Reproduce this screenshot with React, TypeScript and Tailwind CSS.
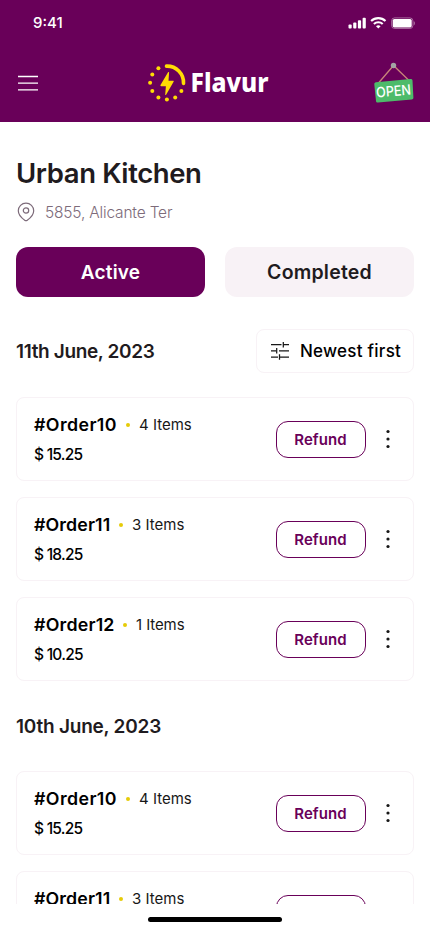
import { clsx } from "clsx";

type Order = {
  id: string;
  items: number;
  price: string;
  idClass: string;
  itemsClass: string;
};

const juneEleven: Order[] = [
  { id: "#Order10", items: 4, price: "15.25", idClass: "w-[82px] tracking-[0.400px]", itemsClass: "tracking-[0]" },
  { id: "#Order11", items: 3, price: "18.25", idClass: "w-[75px] tracking-[0.100px]", itemsClass: "tracking-[0]" },
  { id: "#Order12", items: 1, price: "10.25", idClass: "w-[79px] tracking-[0.200px]", itemsClass: "tracking-[-0.100px]" },
];

const juneTen = juneEleven.slice(0, 2);

const StatusBar = () => (
  <div className="flex h-[46px] items-center justify-between pl-[33px] pr-[15px] text-white">
    <span className="text-[15px] font-medium leading-5 tracking-[0]">9:41</span>
    <svg width="68" height="14" viewBox="0 0 68 14" fill="none">
      <g fill="white">
        <rect x="1.5" y="8.600" width="3.2" height="3.800" rx="0.9" />
        <rect x="6.2" y="6.600" width="3.2" height="5.800" rx="0.9" />
        <rect x="10.9" y="4.200" width="3.2" height="8.200" rx="0.9" />
        <rect x="15.6" y="1.8" width="3.2" height="10.6" rx="0.9" />
      </g>
      <g stroke="white" strokeWidth="2.1">
        <path d="M24.100 5a10.500 10.500 0 0 1 14.400 0" />
        <path d="M26.900 8a6.400 6.400 0 0 1 8.800 0" />
      </g>
      <path d="M31.3 12.6l-2.3-2.3a3.3 3.3 0 0 1 4.6 0z" fill="white" />
      <rect x="44.600" y="1.900" width="21.300" height="10.600" rx="3" stroke="white" strokeOpacity="0.4" />
      <rect x="45.700" y="3" width="19" height="8.400" rx="1.6" fill="white" />
      <path d="M66.800 5.200v4c.8-.3 1.100-1.1 1.100-2s-.3-1.700-1.100-2z" fill="white" fillOpacity="0.45" />
    </svg>
  </div>
);

const Logo = () => (
  <div className="flex items-center">
    <svg width="40" height="40" viewBox="0 0 40 40" fill="#ffdc04">
      <path d="M19.500 3.100A16.500 16.500 0 0 1 36.500 20.400" fill="none" stroke="#ffdc04" strokeWidth="3.600" strokeLinecap="round" />
      <path d="M20.900 9.400L13.500 22.100c-.3.600 0 1.100.6 1.100h4.800l-.7 8.300c0 .7.500.8.900.2l7.500-12.900c.3-.6.100-1.100-.6-1.100h-4.500l.6-8.200c0-.7-.8-.8-1.200-.1z" />
      <circle cx="11.400" cy="5.200" r="2" />
      <circle cx="5.300" cy="11.400" r="2" />
      <circle cx="3.100" cy="19.800" r="2" />
      <circle cx="5.300" cy="28.100" r="2" />
      <circle cx="11.400" cy="34.400" r="2" />
      <circle cx="19.900" cy="36.500" r="2" />
      <circle cx="28.200" cy="34.400" r="2" />
      <circle cx="34.400" cy="28.100" r="2" />
    </svg>
    <svg width="84" height="40" viewBox="0 0 84 40" className="overflow-visible">
      <text x="3.500" y="29.300" textLength="78" lengthAdjust="spacingAndGlyphs" fill="white" className="font-['Noto_Sans',sans-serif] text-[26.500px] font-extrabold">
        Flavur
      </text>
    </svg>
  </div>
);

const OpenSign = () => (
  <svg width="42" height="44" viewBox="0 0 42 44" className="overflow-visible">
    <path d="M6.500 22L21.500 4.500L37 19.500" fill="none" stroke="#c9857a" strokeWidth="1.300" />
    <circle cx="21.500" cy="4.500" r="2.700" fill="#a3a3a3" />
    <path d="M4 21.200l34.500-3.100c1.100-.1 1.900.4 2 1.500l.9 17c.1 1.100-.5 1.800-1.600 1.900L6 41.600c-1.100.1-1.900-.5-2-1.600L2.300 23.300c-.1-1.200.6-2 1.700-2.100z" fill="#4dbb6a" />
    <text x="4" y="35" textLength="35" lengthAdjust="spacingAndGlyphs" fill="white" transform="rotate(-5 21 30)" className="font-['Inter',sans-serif] text-[14px] font-medium">
      OPEN
    </text>
  </svg>
);

const Header = () => (
  <header className="h-[122px] bg-[#690059]">
    <StatusBar />
    <div className="flex h-[74px] items-center justify-between pl-[18px] pr-4">
      <svg width="20" height="16" viewBox="0 0 20 16" stroke="white" strokeWidth="1.300">
        <path d="M0 1.500h20M0 8.200h20M0 14.900h20" />
      </svg>
      <div className="pl-[7px]">
        <Logo />
      </div>
      <OpenSign />
    </div>
  </header>
);

const OrderCard = ({ order }: { order: Order }) => (
  <div className="flex h-[84px] shrink-0 items-center rounded-[8px] border border-[#f8f2f6] pl-[17px] pr-[14px]">
    <div className="flex flex-1 flex-col gap-[6px] pt-[2px]">
      <div className="flex items-center whitespace-nowrap">
        <span className={clsx("text-[17.800px] font-semibold leading-6 text-black", order.idClass)}>{order.id}</span>
        <span className="ml-[10px] mr-[9px] size-1 shrink-0 rounded-full bg-[#e6cb08]" />
        <span className={clsx("text-[15px] leading-6 text-[#171717]", order.itemsClass)}>{order.items} Items</span>
      </div>
      <p className="text-[15.500px] font-medium leading-6 tracking-[-0.750px] text-black">$ {order.price}</p>
    </div>
    <button className="h-[37px] w-[90px] rounded-[12px] border border-[#690059] pr-px pt-[2px] text-[15px] font-semibold tracking-[0.100px] text-[#690059]">Refund</button>
    <svg width="16" height="20" viewBox="0 0 16 20" fill="#171717" className="ml-[14px] mr-[3px]">
      <circle cx="8" cy="2.500" r="1.600" />
      <circle cx="8" cy="10" r="1.600" />
      <circle cx="8" cy="17.500" r="1.600" />
    </svg>
  </div>
);

const App = () => {
  return (
    <div className="flex h-[932px] w-[430px] flex-col overflow-hidden bg-white font-['Inter',sans-serif] text-[#1f1b20]">
      <Header />
      <main className="flex h-[782px] shrink-0 flex-col overflow-hidden px-4 pt-8">
        <h1 className="pt-px text-[27.500px] font-semibold leading-9 tracking-[-0.400px]">Urban Kitchen</h1>
        <div className="mt-[10px] flex h-[22px] items-center gap-[10px] pl-px text-[#7d6b7a]">
          <svg width="18" height="20" viewBox="0 0 18 20" fill="none" stroke="currentColor" strokeWidth="1.200">
            <path d="M9 1.200c-4.300 0-7.700 3.400-7.700 7.600 0 5 4.600 8.200 6.700 9.600.6.400 1.400.4 2 0 2.100-1.400 6.700-4.600 6.700-9.600 0-4.200-3.400-7.600-7.700-7.600z" />
            <circle cx="9" cy="8.500" r="2.700" />
          </svg>
          <span className="pt-[2px] text-[15.500px] font-light tracking-[-0.180px]">5855, Alicante Ter</span>
        </div>

        <div className="mt-6 grid h-[50px] shrink-0 grid-cols-2 gap-5">
          <button className="rounded-[12px] bg-[#690059] pt-[2px] text-[19px] font-semibold tracking-[0.200px] text-white">Active</button>
          <button className="rounded-[12px] bg-[#f8f2f6] pt-px text-[19.500px] font-semibold tracking-[0.200px]">Completed</button>
        </div>

        <div className="mt-8 flex h-11 shrink-0 items-center justify-between">
          <h2 className="pt-[2px] text-[19px] font-semibold tracking-[-0.350px]">11th June, 2023</h2>
          <button className="flex h-11 w-[158px] items-center gap-[10px] whitespace-nowrap rounded-[8px] border border-[#f8f2f6] pl-[13px] text-[17px] font-medium tracking-[0.250px] text-black">
            <svg width="20" height="20" viewBox="0 0 20 20" fill="none" stroke="#171717" strokeWidth="1.250" className="shrink-0">
              <path d="M1 3.500h10.500M13.300 3.500H19M13.300 1v5.500M1 9.800h5M6.700 7v5.500M9 9.800h10M1 16h7M9.500 13.300v5.500M9.500 16H19" />
            </svg>
            <span className="pt-[2px]">Newest first</span>
          </button>
        </div>

        <div className="mt-6 flex shrink-0 flex-col gap-4">
          {juneEleven.map((order) => (
            <OrderCard key={order.id} order={order} />
          ))}
        </div>

        <h2 className="mb-[29px] mt-[31px] h-[30px] shrink-0 text-[19px] font-semibold leading-[30px] tracking-[-0.220px]">10th June, 2023</h2>

        <div className="flex shrink-0 flex-col gap-4">
          {juneTen.map((order) => (
            <OrderCard key={order.id} order={order} />
          ))}
        </div>
      </main>
      <div className="flex h-7 items-start justify-center pt-[13px]">
        <div className="h-[5px] w-[134px] rounded-full bg-black" />
      </div>
    </div>
  );
};

export default App;
